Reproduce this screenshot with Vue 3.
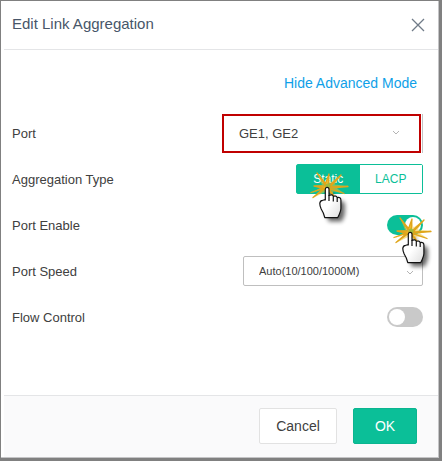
<template>
  <form class="dialog" @submit.prevent>
    <header class="dialog-header">
      <h1>Edit Link Aggregation</h1>
      <button type="button" class="btn-close" aria-label="Close">
        <svg width="14" height="14" viewBox="0 0 14 14">
          <path d="M1 1L13 13M13 1L1 13" fill="none" stroke="#707b88" stroke-width="1.3" />
        </svg>
      </button>
    </header>

    <main class="dialog-body">
      <div class="mode-row">
        <a href="#" @click.prevent>Hide Advanced Mode</a>
      </div>

      <div class="form-row">
        <label for="port">Port</label>
        <div class="select-wrap port-select">
          <select id="port" v-model="port">
            <option>GE1, GE2</option>
          </select>
          <svg class="chevron" width="8" height="6" viewBox="0 0 8 6">
            <path d="M1 1L4 4L7 1" fill="none" stroke="#b4b4b4" />
          </svg>
        </div>
      </div>

      <div class="form-row">
        <span id="type-label">Aggregation Type</span>
        <div class="segmented" role="group" aria-labelledby="type-label">
          <button
            v-for="type in types"
            :key="type"
            type="button"
            :class="{ active: type === aggregationType }"
            @click="aggregationType = type"
          >{{ type }}</button>
          <svg class="pointer" width="56" height="56" viewBox="0 0 56 56">
            <use href="#click-hand" />
          </svg>
        </div>
      </div>

      <div class="form-row">
        <label for="enable">Port Enable</label>
        <div class="switch-wrap">
          <input id="enable" v-model="portEnabled" type="checkbox" class="switch" />
          <svg class="pointer" width="56" height="56" viewBox="0 0 56 56">
            <use href="#click-hand" />
          </svg>
        </div>
      </div>

      <div class="form-row">
        <label for="speed">Port Speed</label>
        <div class="select-wrap speed-select">
          <select id="speed" v-model="speed">
            <option>Auto(10/100/1000M)</option>
          </select>
          <svg class="chevron" width="8" height="6" viewBox="0 0 8 6">
            <path d="M1 1L4 4L7 1" fill="none" stroke="#b4b4b4" />
          </svg>
        </div>
      </div>

      <div class="form-row">
        <label for="flow">Flow Control</label>
        <input id="flow" v-model="flowControl" type="checkbox" class="switch" />
      </div>
    </main>

    <footer class="dialog-footer">
      <button type="button" class="btn-cancel">Cancel</button>
      <button type="submit" class="btn-ok">OK</button>
    </footer>

    <svg class="defs" width="0" height="0" aria-hidden="true">
      <defs>
        <linearGradient id="hand-fill" x1="0" y1="0" x2="1" y2="1">
          <stop offset="0.5" stop-color="#fff" />
          <stop offset="1" stop-color="#ddd" />
        </linearGradient>
        <filter id="hand-blur" x="-40%" y="-40%" width="180%" height="180%">
          <feGaussianBlur stdDeviation="2" />
        </filter>
        <path
          id="hand-shape"
          d="M22.3 30V19.3Q22.3 17.4 24.1 17.4Q26 17.4 26 19.3V25.4Q29.4 24 30.3 26.4Q33.3 25.2 34.2 27.6Q37.7 26.8 37.9 30V38.5Q37.8 41.5 34.8 47.6H21.8Q20.8 43 18.2 39Q16.8 36 16.8 33.4Q17 30.6 19.6 30.3Q21.2 29.8 22.3 30Z"
        />
        <g id="click-hand">
          <use href="#hand-shape" transform="translate(4 4)" fill="#000" opacity="0.6" filter="url(#hand-blur)" />
          <path
            d="M14.5 3.5L23 12.5L25.5 5L27.5 12.5L37.5 5.5L31.5 14.5L44.5 16L34 18.5L41 23L30.5 21.5L29 25L25 20.5L20 23L11 27.5L18.5 20L8.5 23L17 18L11 16L19 15Z"
            fill="#f3c12d"
            fill-opacity="0.55"
          />
          <path
            d="M25 17L14 3L22 15L26 4L25 17L38 5L27 17L45 16.5L26 18L41 23.5L25 18L31 26L23 18L10 27.5L21 18L8 22.5L20 18L11 16L22 16Z"
            fill="#f3c12d"
            stroke="#dfa51b"
            stroke-width="1.3"
            stroke-linejoin="round"
          />
          <circle cx="25" cy="16" r="2.5" fill="#8fbd45" opacity="0.8" />
          <use href="#hand-shape" fill="url(#hand-fill)" stroke="#111" stroke-width="1.2" stroke-linejoin="round" />
          <path d="M26 25V31M30.3 26.5V31.5M34.2 28V32" fill="none" stroke="#111" stroke-width="1.2" />
        </g>
      </defs>
    </svg>
  </form>
</template>

<script setup>
import { ref } from 'vue'

const types = ['Static', 'LACP']

const port = ref('GE1, GE2')
const aggregationType = ref('Static')
const portEnabled = ref(true)
const speed = ref('Auto(10/100/1000M)')
const flowControl = ref(false)
</script>

<style>
body {
  margin: 0;
  background: #fff;
}
</style>

<style scoped>
.dialog {
  box-sizing: border-box;
  min-height: 100vh;
  display: flex;
  flex-direction: column;
  border: 1px solid #808080;
  border-right: 3px solid #808080;
  border-bottom: 3px solid #808080;
  box-shadow: inset -1px -1px #c4c4c6;
  padding: 0 1px 1px 3px;
  background: #fff;
  color: #404040;
  font-family: 'Liberation Sans', Arial, sans-serif;
  font-size: 13px;
}

button,
select {
  font-family: inherit;
  margin: 0;
}

.dialog-header {
  display: flex;
  align-items: center;
  justify-content: space-between;
  height: 48px;
  padding: 0 13px 0 8px;
  border-bottom: 1px solid #e4e5e7;
}

.dialog-header h1 {
  margin: 0;
  padding-bottom: 4px;
  font-size: 15px;
  font-weight: 400;
  color: #475669;
}

.btn-close {
  display: flex;
  padding: 0;
  border: none;
  background: none;
}

.dialog-body {
  flex: 1;
  padding: 22px 15px 0 8px;
}

.mode-row {
  display: flex;
  justify-content: flex-end;
  align-items: center;
  height: 22px;
  margin-bottom: 16px;
  padding-right: 6px;
  font-size: 14px;
}

.mode-row a {
  color: #0f9fe8;
  text-decoration: none;
}

.form-row {
  display: flex;
  align-items: center;
  justify-content: space-between;
  height: 46px;
}

.select-wrap {
  position: relative;
  box-sizing: border-box;
  width: 180px;
}

.select-wrap select {
  display: block;
  box-sizing: border-box;
  width: 100%;
  height: 30px;
  padding: 0 24px 0 15px;
  appearance: none;
  border: 1px solid #bfbfbf;
  border-radius: 2px;
  background: #fff;
  color: #404040;
  font-size: 11px;
}

.port-select {
  width: 201px;
  padding-right: 1px;
  border-right: 1px solid #c4c4c4;
}

.port-select select {
  height: 39px;
  border: 2px solid #c00000;
  border-radius: 0;
  font-size: 13px;
}

.chevron {
  position: absolute;
  right: 9px;
  top: 14px;
  pointer-events: none;
}

.port-select .chevron {
  right: 22px;
  top: 16px;
}

.segmented {
  position: relative;
  display: flex;
  box-sizing: border-box;
  width: 127px;
  height: 30px;
  border: 1px solid #0bbf98;
  border-radius: 2px;
}

.segmented button {
  flex: 1;
  padding: 0;
  border: none;
  background: #fff;
  color: #0bbf98;
  font-size: 12px;
}

.segmented button.active {
  background: #0bbf98;
  color: #fff;
}

.pointer {
  position: absolute;
  pointer-events: none;
  z-index: 1;
}

.segmented .pointer {
  left: 6px;
  top: 5px;
}

.switch-wrap {
  position: relative;
  display: flex;
}

.switch-wrap .pointer {
  left: -1px;
  top: 0;
}

.switch {
  display: flex;
  align-items: center;
  box-sizing: border-box;
  width: 36px;
  height: 20px;
  margin: 0;
  padding: 2px;
  appearance: none;
  border-radius: 10px;
  background: #c9c9c9;
}

.switch::before {
  content: '';
  width: 16px;
  height: 16px;
  border-radius: 50%;
  background: #fff;
}

.switch:checked {
  justify-content: flex-end;
  background: #0bbf98;
}

.dialog-footer {
  display: flex;
  justify-content: flex-end;
  gap: 16px;
  padding: 12px 21px 13px;
  border-top: 1px solid #e4e5e7;
  background: #fafafb;
}

.dialog-footer button {
  box-sizing: border-box;
  height: 36px;
  padding: 0;
  border-radius: 2px;
  font-size: 14px;
}

.btn-cancel {
  width: 78px;
  border: 1px solid #e2e2e2;
  background: #fff;
  color: #404040;
}

.dialog-footer .btn-ok {
  width: 64px;
  border: 1px solid #0bb590;
  background: #0bbf98;
  color: #fff;
}

.defs {
  position: absolute;
}
</style>
